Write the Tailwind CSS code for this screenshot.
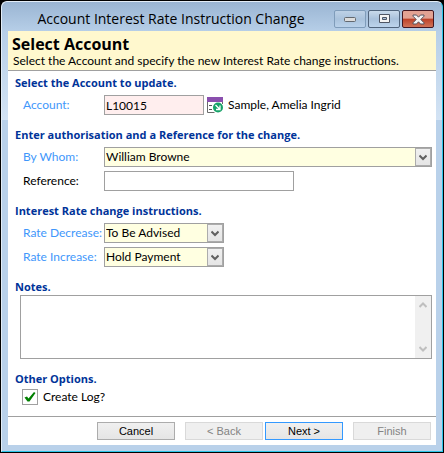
<!DOCTYPE html>
<html lang="en">
  <head>
    <meta charset="utf-8" />
    <title>Account Interest Rate Instruction Change</title>
    <meta name="viewport" content="width=device-width, initial-scale=1" />
    <script src="https://cdn.jsdelivr.net/npm/@tailwindcss/browser@4"></script>
  </head>
  <body class="bg-black">
  <!-- Window frame -->
  <div class="flex flex-col min-h-screen bg-black p-px font-[family-name:Lato,sans-serif] text-[12px] leading-4 text-black">
    <div class="flex flex-col flex-1 rounded-t-md border border-t-[#e3edf7] border-l-[#e3edf7] border-r-[#2cc4e8] border-b-[#2cc4e8] bg-[#b9d1ea] bg-linear-to-b from-[#9ab5d3] via-[#b7cfe8] via-[30px] to-[#d3e3f4] to-[118px] bg-[length:100%_118px] bg-no-repeat px-[6px] pb-[6px]">
      <!-- Title bar -->
      <div class="flex items-center h-[29px] pt-[5px]">
        <h1 class="flex-1 text-center font-[family-name:Open_Sans,sans-serif] text-[14px] leading-5 whitespace-nowrap">Account Interest Rate Instruction Change</h1>
        <div class="flex gap-[2px] pr-[2px]">
          <button aria-label="Minimize" class="flex items-center justify-center w-8 h-[18px] rounded-[2px] border border-[#7f9cba] bg-linear-to-b from-[#bdd1e6] via-[#a9c2dc] to-[#b9d1ea]">
            <svg width="12" height="6" viewBox="0 0 12 6"><rect x="0.5" y="1.5" width="11" height="4" rx="1" fill="#dcdcdc" stroke="#62686f" /></svg>
          </button>
          <button aria-label="Maximize" class="flex items-center justify-center w-8 h-[18px] rounded-[2px] border border-[#50647c] bg-linear-to-b from-[#c9daeb] via-[#a9c1db] to-[#bdd4ec]">
            <svg width="11" height="10" viewBox="0 0 11 10"><path d="M.5.5h10v8H.5zM3.500 3.500v2h4v-2z" fill="#f4f4f4" fill-rule="evenodd" stroke="#4f5664" /></svg>
          </button>
          <button aria-label="Close" class="flex items-center justify-center w-8 h-[18px] rounded-[2px] border border-[#431721] bg-linear-to-b from-[#e2a293] from-45% via-[#bd4027] via-50% to-[#d07358]">
            <svg width="13" height="11" viewBox="0 0 13 11"><path d="M1 1h3.500l2 2.200L8.500 1H12v1.200L8.800 5.500 12 8.800V10H8.500l-2-2.200L4.500 10H1V8.800l3.200-3.300L1 2.200z" fill="#f4f4f4" stroke="#57525c" /></svg>
          </button>
        </div>
      </div>

      <div class="flex flex-col flex-1 bg-white">
        <!-- Banner -->
        <header class="h-10 bg-[#fff8ce] border-b border-[#a0a0a0] px-1 pt-1">
          <h2 class="font-[family-name:Open_Sans,sans-serif] text-[16px] leading-[18px] font-bold">Select Account</h2>
          <p class="pl-px leading-4 whitespace-nowrap">Select the Account and specify the new Interest Rate change instructions.</p>
        </header>

        <form id="wizard" class="flex flex-col flex-1 gap-3 pt-1 pl-[7px] pr-1">
          <section>
            <h3 class="font-[family-name:Open_Sans,sans-serif] text-[11px] font-bold text-[#003399] mb-1">Select the Account to update.</h3>
            <div class="flex items-center pl-2">
              <label for="account" class="w-[81px] text-[#3f97fb]">Account:</label>
              <input id="account" type="text" value="L10015" class="w-[100px] h-5 border border-[#a0a0a0] bg-[#ffeeee] px-px" />
              <button type="button" aria-label="Find account" class="ml-[3px] mr-[5px]">
                <svg width="16" height="16" viewBox="0 0 16 16">
                  <path d="M.5 3v12.500h7M15.500 3v4" fill="none" stroke="#6a6a6a" />
                  <rect width="16" height="5" fill="#8a4fae" />
                  <path d="M2 8.500h3M2 12.500h3" stroke="#555" />
                  <circle cx="11" cy="10.500" r="5" fill="#17a268" />
                  <path d="M8.500 8l4 4M13 8.500v4H9" fill="none" stroke="#fff" stroke-width="1.300" />
                </svg>
              </button>
              <span>Sample, Amelia Ingrid</span>
            </div>
          </section>

          <section>
            <h3 class="font-[family-name:Open_Sans,sans-serif] text-[11px] font-bold text-[#003399] mb-1">Enter authorisation and a Reference for the change.</h3>
            <div class="flex flex-col gap-1 pl-2">
              <div class="flex items-center">
                <label for="whom" class="w-[81px] text-[#3f97fb]">By Whom:</label>
                <div class="relative flex-1">
                  <select id="whom" class="block w-full h-5 appearance-none border border-[#a0a0a0] bg-[#ffffe1] pl-px">
                    <option>William Browne</option>
                  </select>
                  <span class="absolute right-px top-px flex items-center justify-center w-4 h-[18px] border border-[#acacac] bg-linear-to-b from-[#f0f0f0] to-[#e5e5e5] pointer-events-none">
                    <svg width="8" height="7" viewBox="0 0 8 7"><path d="M.5 1.500L4 5l3.500-3.500" fill="none" stroke="#606060" stroke-width="2" /></svg>
                  </span>
                </div>
              </div>
              <div class="flex items-center">
                <label for="reference" class="w-[81px]">Reference:</label>
                <input id="reference" type="text" class="w-[190px] h-5 border border-[#a0a0a0] bg-white px-px" />
              </div>
            </div>
          </section>

          <section>
            <h3 class="font-[family-name:Open_Sans,sans-serif] text-[11px] font-bold text-[#003399] mb-1">Interest Rate change instructions.</h3>
            <div class="flex flex-col gap-1 pl-2">
              <div class="flex items-center">
                <label for="decrease" class="w-[81px] text-[#3f97fb] whitespace-nowrap">Rate Decrease:</label>
                <div class="relative w-[120px]">
                  <select id="decrease" class="block w-full h-5 appearance-none border border-[#a0a0a0] bg-[#ffffe1] pl-px">
                    <option>To Be Advised</option>
                  </select>
                  <span class="absolute right-px top-px flex items-center justify-center w-4 h-[18px] border border-[#acacac] bg-linear-to-b from-[#f0f0f0] to-[#e5e5e5] pointer-events-none">
                    <svg width="8" height="7" viewBox="0 0 8 7"><path d="M.5 1.500L4 5l3.500-3.500" fill="none" stroke="#606060" stroke-width="2" /></svg>
                  </span>
                </div>
              </div>
              <div class="flex items-center">
                <label for="increase" class="w-[81px] text-[#3f97fb] whitespace-nowrap">Rate Increase:</label>
                <div class="relative w-[120px]">
                  <select id="increase" class="block w-full h-5 appearance-none border border-[#a0a0a0] bg-[#ffffe1] pl-px">
                    <option>Hold Payment</option>
                  </select>
                  <span class="absolute right-px top-px flex items-center justify-center w-4 h-[18px] border border-[#acacac] bg-linear-to-b from-[#f0f0f0] to-[#e5e5e5] pointer-events-none">
                    <svg width="8" height="7" viewBox="0 0 8 7"><path d="M.5 1.500L4 5l3.500-3.500" fill="none" stroke="#606060" stroke-width="2" /></svg>
                  </span>
                </div>
              </div>
            </div>
          </section>

          <section>
            <h3 class="font-[family-name:Open_Sans,sans-serif] text-[11px] font-bold text-[#003399]"><label for="notes">Notes.</label></h3>
            <div class="flex h-16 ml-[5px] border border-[#a0a0a0]">
              <textarea id="notes" class="flex-1 resize-none px-px"></textarea>
              <!-- Scroll bar -->
              <div class="flex flex-col justify-between items-center w-4 py-[6px] bg-[#f0f0f0]">
                <svg width="8" height="6" viewBox="0 0 8 6"><path d="M.5 5L4 1.500 7.500 5" fill="none" stroke="#bfbfbf" stroke-width="2" /></svg>
                <svg width="8" height="6" viewBox="0 0 8 6"><path d="M.5 1L4 4.500 7.500 1" fill="none" stroke="#bfbfbf" stroke-width="2" /></svg>
              </div>
            </div>
          </section>

          <section>
            <h3 class="font-[family-name:Open_Sans,sans-serif] text-[11px] font-bold text-[#003399] mb-[2px]">Other Options.</h3>
            <label class="flex items-center gap-[5px] pl-[7px]">
              <span class="relative size-4">
                <input type="checkbox" checked class="peer block size-4 appearance-none border border-[#a0a0a0] bg-white" />
                <svg class="absolute inset-0 hidden peer-checked:block pointer-events-none" width="16" height="16" viewBox="0 0 16 16"><path d="M2.500 8.500L5 7.500 6.500 9.500 12 3l1.500 1L7.500 12.500H5.500z" fill="#008000" /></svg>
              </span>
              Create Log?
            </label>
          </section>
        </form>

        <!-- Wizard buttons -->
        <footer class="flex justify-end h-[29px] border-t border-[#a0a0a0] pt-[5px] pr-[5px] font-[family-name:Liberation_Sans,Arial,sans-serif] text-[11px]">
          <button class="w-[78px] h-[18px] mr-[10px] border border-[#acacac] bg-linear-to-b from-[#f0f0f0] to-[#e5e5e5]">Cancel</button>
          <button disabled class="w-[78px] h-[18px] mr-[2px] border border-[#d9d9d9] bg-[#efefef] text-[#838383]">&lt; Back</button>
          <button form="wizard" class="w-[78px] h-[18px] mr-[10px] border border-[#3399ff] bg-linear-to-b from-[#f0f0f0] to-[#e5e5e5]">Next &gt;</button>
          <button disabled class="w-[78px] h-[18px] border border-[#d9d9d9] bg-[#efefef] text-[#838383]">Finish</button>
        </footer>
      </div>
    </div>
  </div>
  </body>
</html>
